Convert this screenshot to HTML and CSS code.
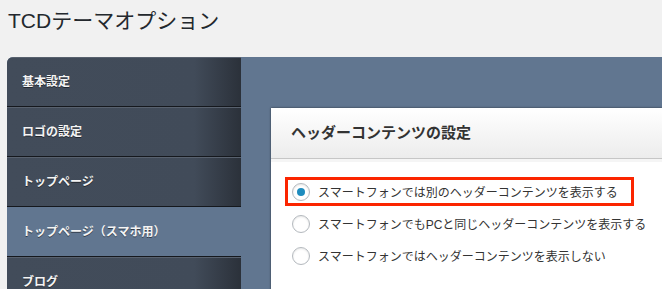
FILE: index.html
```html
<!DOCTYPE html>
<html>

<head>
    <meta http-equiv="Content-Type" content="text/html; charset=utf-8" />
    <title>TCDテーマオプション</title>
    <link rel="stylesheet" href="styles.css">
</head>

<body>

    <h1 class="page-title">TCDテーマオプション</h1>

    <div class="options">
        <!-- 左メニュー -->
        <ul class="options-menu">
            <li><a href="#">基本設定</a></li>
            <li><a href="#">ロゴの設定</a></li>
            <li><a href="#">トップページ</a></li>
            <li class="current"><a href="#">トップページ（スマホ用）</a></li>
            <li><a href="#">ブログ</a></li>
            <li><a href="#">フッター</a></li>
        </ul>

        <div class="options-main">
            <div class="options-box">
                <h3 class="options-box-title">ヘッダーコンテンツの設定</h3>
                <ul class="options-radio">
                    <li class="marked">
                        <span class="radio checked"></span>
                        スマートフォンでは別のヘッダーコンテンツを表示する
                    </li>
                    <li>
                        <span class="radio"></span>
                        スマートフォンでもPCと同じヘッダーコンテンツを表示する
                    </li>
                    <li>
                        <span class="radio"></span>
                        スマートフォンではヘッダーコンテンツを表示しない
                    </li>
                </ul>
            </div>
        </div>
    </div>

</body>

</html>
```

FILE: styles.css
```css
html {
    overflow: hidden;
}

body {
    background: #f1f1f1;
    padding: 0px;
    margin: 0px;
    font-size: 12px;
    font-family: "Liberation Sans", "Noto Sans CJK JP", sans-serif;
}

.page-title {
    margin: 0px;
    padding: 7px 8px 0px;
    height: 50px;
    font-size: 21px;
    line-height: 27px;
    font-weight: 400;
    color: #23282d;
}

.options {
    display: flex;
    margin-left: 7px;
    background: #617690;
    border-radius: 6px 0 0 0;
    overflow: hidden;
}

.options-menu {
    width: 234px;
    margin: 0px;
    padding: 0px;
    list-style: none;
    flex-shrink: 0;
}

.options-menu li {
    height: 48px;
    border-top: 1px solid #58616e;
    border-bottom: 1px solid #15181d;
    background: linear-gradient(to right, #424c5a 0%, #414b59 80%, #2b313a 100%);
}

.options-menu li.current {
    background: #617690;
    border-top-color: #617690;
}

.options-menu a {
    display: block;
    line-height: 48px;
    padding-left: 15px;
    color: #f4f4f4;
    font-weight: bold;
    text-decoration: none;
    text-shadow: 0 1px 0 rgba(0, 0, 0, 0.5);
}

.options-main {
    flex: 1;
    min-width: 0;
    padding: 51px 0px 0px 30px;
}

.options-box {
    height: 240px;
    background: #fff;
    box-shadow: 0 0 2px rgba(0, 0, 0, 0.6);
}

.options-box-title {
    margin: 0px;
    height: 50px;
    line-height: 50px;
    padding-left: 20px;
    font-size: 15px;
    font-weight: bold;
    color: #333;
    background: linear-gradient(#ffffff, #ececec);
    border-bottom: 1px solid #c6c6c6;
}

.options-radio {
    margin: 0px;
    padding: 15px 0px 0px 14px;
    list-style: none;
    border-top: 3px solid #f5f5f5;
}

.options-radio li {
    display: flex;
    align-items: center;
    gap: 8px;
    width: fit-content;
    height: 23px;
    padding: 0px 13px 0px 4px;
    margin-bottom: 3px;
    border: 3px solid transparent;
    color: #333;
    font-size: 12px;
    white-space: nowrap;
}

.options-radio li.marked {
    border-color: #fb2500;
}

.radio {
    position: relative;
    width: 16px;
    height: 16px;
    border: 1px solid #b4b9be;
    border-radius: 50%;
    background: #fff;
    box-shadow: inset 0 1px 2px rgba(0, 0, 0, 0.1);
    flex-shrink: 0;
}

.radio.checked::before {
    content: "";
    position: absolute;
    left: 4px;
    top: 4px;
    width: 8px;
    height: 8px;
    border-radius: 50%;
    background: #1e8cbe;
}
```
